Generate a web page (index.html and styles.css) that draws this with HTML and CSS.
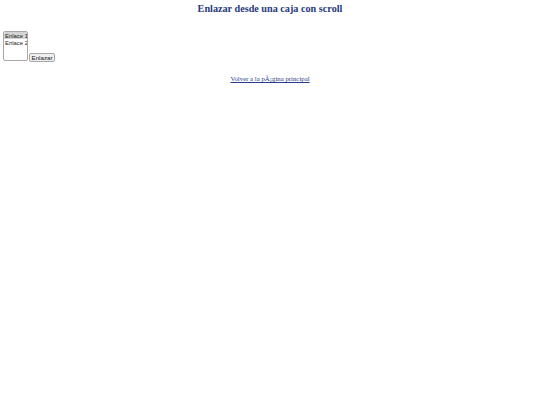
FILE: index.html
```html
<!DOCTYPE html>
<html lang="es">
<head>
<meta charset="utf-8">
<title>Enlazar desde una caja con scroll</title>
<link rel="stylesheet" href="styles.css">
</head>
<body>
<h1 class="title">Enlazar desde una caja con scroll</h1>
<form class="jump">
  <select class="list" size="4">
    <option selected>Enlace 1</option>
    <option>Enlace 2</option>
  </select>
  <button type="button" class="go">Enlazar</button>
</form>
<p class="back"><a class="back-link" href="#">Volver a la pÃ¡gina principal</a></p>
</body>
</html>
```
FILE: styles.css
```css
html, body { background: #fff; }
body {
  margin: 3px;
  font-family: "Liberation Sans", Arial, sans-serif;
  color: #000;
}
.title {
  margin: 0;
  text-align: center;
  font-family: "Liberation Serif", "Times New Roman", serif;
  font-size: 10.2px;
  line-height: 12px;
  font-weight: bold;
  color: #1f3a80;
}
.jump {
  margin-top: 16px;
  display: flex;
  align-items: flex-end;
  gap: 1px;
}
.list {
  font-family: "Liberation Sans", Arial, sans-serif;
  font-size: 5.9px;
  width: 25px;
  height: 30px;
  padding: 0;
  margin: 0;
  border: 1px solid #a8a8a8;
  border-radius: 2px;
  scrollbar-width: none;
  background: #fff;
  color: #222;
}
.list option { padding: 0.5px 0 0.5px 1px; line-height: 7px; min-height: 0; }
.list option:checked { background: #d4d4d4; color: #222; }
.go {
  font-family: "Liberation Sans", Arial, sans-serif;
  font-size: 6.2px;
  height: 9px;
  width: 26px;
  padding: 0;
  margin: 0 0 -1px;
  border: 1px solid #a8a8a8;
  border-radius: 2px;
  background: #efefef;
  color: #222;
  line-height: 7px;
}
.back {
  margin: 13px 0 0;
  text-align: center;
  font-family: "Liberation Serif", "Times New Roman", serif;
  font-size: 6.8px;
  line-height: 10px;
}
.back-link, .back-link:visited { color: #2b3a8c; }
```
